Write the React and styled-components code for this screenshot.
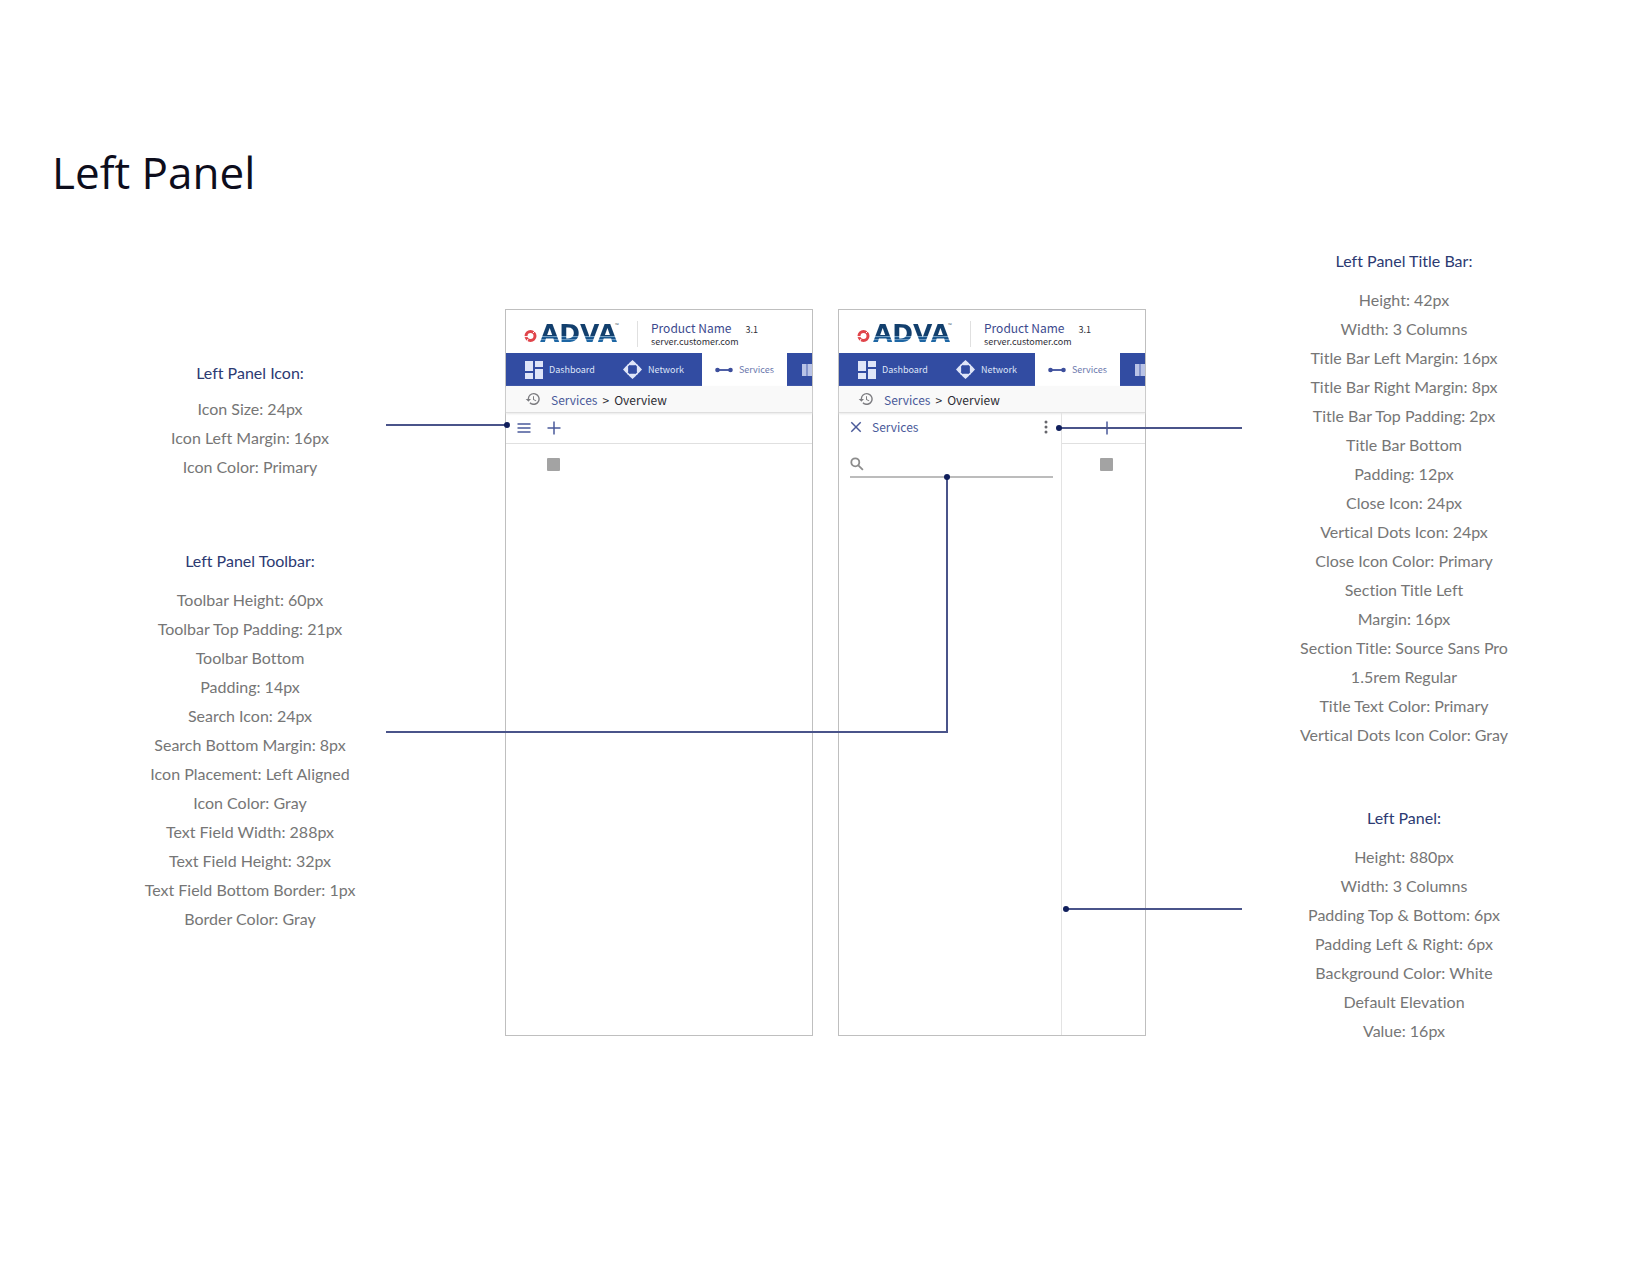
import React from "react";
import styled, { createGlobalStyle } from "styled-components";

const ink = "#2c3a72";
const primary = "#4a5a9a";

const GlobalStyle = createGlobalStyle`
  *, *::before, *::after { box-sizing: border-box; }
  body { margin: 0; background: #fff; }
  h1, h2, ul, p { margin: 0; padding: 0; }
  ul { list-style: none; }
  button { border: 0; padding: 0; background: none; color: inherit; display: flex; cursor: pointer; }
  a { color: inherit; text-decoration: none; }
`;

const Page = styled.main`
  padding: 140px 52px 80px;
  font-family: Lato, "Open Sans", sans-serif;
`;

const PageTitle = styled.h1`
  font: 400 44px/64px "Open Sans", "Noto Sans", sans-serif;
  color: #0d0d1c;
`;

const Board = styled.div`
  display: grid;
  grid-template-columns: minmax(0, 272px) minmax(0, 641px) minmax(0, 278px);
  column-gap: 119px;
  justify-content: center;
  padding: 42px 0 0 7px;
`;

const Notes = styled.div`
  display: flex;
  flex-direction: column;
  gap: ${(p) => p.$gap}px;
  padding-top: ${(p) => p.$top}px;
  text-align: center;
`;

const Note = styled.section`
  display: flex;
  flex-direction: column;
  gap: ${(p) => (p.$tight ? 7 : 10)}px;
  font-size: 16px;
  line-height: 29px;
  font-variant-ligatures: none;
  color: #767676;
`;

const NoteTitle = styled.h2`
  font: inherit;
  color: ${ink};
`;

const Stage = styled.div`
  display: grid;
  grid-template-columns: minmax(0, 1fr) minmax(0, 1fr);
  column-gap: 25px;
  align-items: start;
  padding-top: 63px;
`;

const Screen = styled.article`
  position: relative;
  display: flex;
  flex-direction: column;
  min-height: 727px;
  border: 1px solid #bfbfbf;
  font-family: "Noto Sans CJK SC", "Noto Sans", sans-serif;
`;

const Header = styled.header`
  display: flex;
  align-items: center;
  height: 43px;
  padding: 4px 0 0 18px;
`;

const Brand = styled.div`
  display: flex;
  flex: none;
  align-items: center;
  gap: 3px;
  width: 114px;
  height: 26px;
  border-right: 1px solid #e0e0e0;
`;

const BrandMark = styled.svg`
  flex: none;
  width: 13px;
  height: 14px;
  margin-top: 4px;
`;

const BrandName = styled.span`
  font: 700 25px/24px "DejaVu Sans", sans-serif;
  color: transparent;
  background: linear-gradient(
    #123f6d 58%, #7fa6c8 60%, #1d5c94 64%, #174f86 70%, #7fa6c8 72%, #1d66a4 76%
  );
  background-clip: text;
`;

const Trademark = styled.sup`
  align-self: flex-start;
  margin-left: -5px;
  font: 400 5px/8px "Open Sans", sans-serif;
  color: #456;
`;

const Product = styled.div`
  display: grid;
  grid-template-columns: auto auto;
  column-gap: 14px;
  align-items: baseline;
  padding-left: 13px;
  color: #2f2f38;
`;

const ProductName = styled.strong`
  font-size: 12px;
  line-height: 14px;
  font-weight: 400;
  color: #3c4a8e;
`;

const Version = styled.span`
  font-size: 9px;
  line-height: 14px;
`;

const Host = styled.span`
  grid-column: 1 / -1;
  font-size: 9px;
  line-height: 10px;
`;

const Tabs = styled.nav`
  display: flex;
  height: 33px;
  padding-left: 6px;
  background: #324ca2;
  overflow: hidden;
`;

const Tab = styled.a`
  display: flex;
  flex: none;
  align-items: center;
  gap: 6px;
  width: ${(p) => p.$width}px;
  padding-left: 13px;
  font-size: 9px;
  color: ${(p) => (p.$active ? "#6b78ad" : "#dfe5f8")};
  background: ${(p) => (p.$active ? "#fff" : "transparent")};
`;

const Glyph = styled.svg`
  flex: none;
  width: ${(p) => p.$size}px;
  height: ${(p) => p.$size}px;
  color: ${(p) => p.$color || "currentColor"};
`;

const Crumbs = styled.nav`
  display: flex;
  align-items: center;
  gap: 5px;
  height: 27px;
  padding-left: 19px;
  border-bottom: 1px solid #dedede;
  box-shadow: 0 1px 2px #e8e8e8;
  background: #f9f9f9;
  font-size: 12px;
  color: #2c2c34;
  a { color: ${primary}; margin-left: 5px; }
`;

const Body = styled.div`
  display: flex;
  flex: 1;
`;

const LeftPanel = styled.aside`
  flex: none;
  width: 223px;
  border-right: 1px solid #e3e3e3;
  padding: 0 8px 0 11px;
`;

const PanelTitleBar = styled.div`
  display: flex;
  align-items: center;
  gap: 10px;
  height: 28px;
  font-size: 12px;
  line-height: 14px;
  color: ${primary};
`;

const PanelTitle = styled.h2`
  flex: 1;
  font: inherit;
`;

const SearchField = styled.label`
  display: flex;
  align-items: center;
  height: 37px;
  padding-top: 10px;
  border-bottom: 2px solid #bcbcbc;
`;

const SearchInput = styled.input`
  flex: 1;
  min-width: 0;
  border: 0;
  outline: 0;
  background: transparent;
  font: inherit;
`;

const Content = styled.div`
  flex: 1;
`;

const Toolbar = styled.div`
  display: flex;
  align-items: center;
  gap: 16px;
  height: 31px;
  padding-left: ${(p) => p.$inset}px;
  border-bottom: 1px solid #e0e0e0;
  color: ${primary};
`;

const Tile = styled.div`
  width: 13px;
  height: 13px;
  margin: 14px 0 0 ${(p) => p.$inset}px;
  border-radius: 1px;
  background: #a3a3a3;
`;

const Connector = styled.div`
  position: absolute;
  z-index: 1;
  left: ${(p) => p.$left}px;
  top: ${(p) => p.$top}px;
  width: ${(p) => p.$width}px;
  height: ${(p) => p.$height || 2}px;
  border: 0 solid #4a548a;
  border-bottom-width: 2px;
  border-right-width: ${(p) => (p.$height ? 2 : 0)}px;
  pointer-events: none;
  &::after {
    content: "";
    position: absolute;
    top: ${(p) => (p.$height ? -3 : -2)}px;
    ${(p) => (p.$dot === "left" ? "left" : "right")}: ${(p) => (p.$height ? -4 : -3)}px;
    width: 6px;
    height: 6px;
    border-radius: 50%;
    background: #101f5c;
  }
`;

const DashboardIcon = () => (
  <Glyph $size={18} viewBox="0 0 18 18" fill="currentColor" aria-hidden="true">
    <path d="M0 0h8v10H0zM10 0h8v6h-8zM0 12h8v6H0zM10 8h8v10h-8z" />
  </Glyph>
);

const NetworkIcon = () => (
  <Glyph $size={19} viewBox="0 0 20 20" aria-hidden="true">
    <circle cx="10" cy="10" r="6.6" fill="none" stroke="currentColor" strokeWidth="1.8" />
    <g fill="currentColor">
      <path d="M10 0 13.800 3.400 12.400 5.400H7.600L6.200 3.400zM10 20l3.800-3.400-1.400-2H7.600l-1.400 2z" />
      <path d="M0 10l3.400-3.800 2 1.400v4.800l-2 1.400zM20 10l-3.400-3.800-2 1.400v4.800l2 1.400z" />
    </g>
  </Glyph>
);

const ServicesIcon = () => (
  <Glyph $size={18} $color="#3d4f9c" viewBox="0 0 18 18" fill="currentColor" aria-hidden="true">
    <circle cx="2.5" cy="9" r="2.3" />
    <circle cx="15.5" cy="9" r="2.3" />
    <path d="M2 8.1h14v1.8H2z" />
  </Glyph>
);

const ColumnsIcon = () => (
  <Glyph $size={18} $color="#b9c3e6" viewBox="0 0 18 18" fill="currentColor" aria-hidden="true">
    <path d="M2 3h4.600v12H2zM7.400 3H12v12H7.400zM13 3h4.600v12H13z" />
  </Glyph>
);

const HistoryIcon = () => (
  <Glyph $size={16} $color="#7c7c80" viewBox="0 0 24 24" fill="currentColor" aria-hidden="true">
    <path d="M13 3a9 9 0 0 0-9 9H1l3.900 3.900.1.1L9 12H6a7 7 0 1 1 2.100 4.900l-1.400 1.400A9 9 0 1 0 13 3zm-1 5v5l4.300 2.500.7-1.200-3.500-2.100V8z" />
  </Glyph>
);

const StrokeIcon = ({ size, d, width = 2 }) => (
  <Glyph $size={size} viewBox="0 0 14 14" fill="none" stroke="currentColor" strokeWidth={width} aria-hidden="true">
    <path d={d} />
  </Glyph>
);

const DotsIcon = () => (
  <Glyph $size={14} $color="#66666c" viewBox="0 0 14 14" fill="currentColor" aria-hidden="true">
    <circle cx="7" cy="2" r="1.5" />
    <circle cx="7" cy="7" r="1.5" />
    <circle cx="7" cy="12" r="1.5" />
  </Glyph>
);

const SearchIcon = () => (
  <Glyph $size={14} $color="#8c8c8c" viewBox="0 0 14 14" fill="none" stroke="currentColor" strokeWidth="1.8" aria-hidden="true">
    <circle cx="5.3" cy="5.3" r="4" />
    <path d="m8.3 8.3 4.6 4.6" />
  </Glyph>
);

const AppHeader = () => (
  <>
    <Header>
      <Brand>
        <BrandMark viewBox="0 0 13 14" aria-hidden="true">
          <circle cx="6.5" cy="7" r="4.5" fill="none" stroke="#e0444a" strokeWidth="3" />
          <path d="M0 7.600h4M4 10l-2 4M9 4l3-3" stroke="#fff" strokeWidth="1" />
        </BrandMark>
        <BrandName>ADVA</BrandName>
        <Trademark>™</Trademark>
      </Brand>
      <Product>
        <ProductName>Product Name</ProductName>
        <Version>3.1</Version>
        <Host>server.customer.com</Host>
      </Product>
    </Header>
    <Tabs aria-label="Main">
      <Tab href="#dashboard" $width={98}><DashboardIcon />Dashboard</Tab>
      <Tab href="#network" $width={92}><NetworkIcon />Network</Tab>
      <Tab href="#services" $width={85} $active aria-current="page"><ServicesIcon />Services</Tab>
      <Tab href="#inventory" $width={60} aria-label="Inventory"><ColumnsIcon /></Tab>
    </Tabs>
    <Crumbs aria-label="Breadcrumb">
      <HistoryIcon />
      <a href="#services">Services</a>
      <span>&gt;</span>
      <span>Overview</span>
    </Crumbs>
  </>
);

const AddButton = () => (
  <button type="button" aria-label="Add">
    <StrokeIcon size={14} width={1.5} d="M7 .5v13M.5 7h13" />
  </button>
);

const notes = {
  icon: ["Left Panel Icon:", ["Icon Size: 24px", "Icon Left Margin: 16px", "Icon Color: Primary"]],
  toolbar: ["Left Panel Toolbar:", [
    "Toolbar Height: 60px", "Toolbar Top Padding: 21px", "Toolbar Bottom", "Padding: 14px",
    "Search Icon: 24px", "Search Bottom Margin: 8px", "Icon Placement: Left Aligned",
    "Icon Color: Gray", "Text Field Width: 288px", "Text Field Height: 32px",
    "Text Field Bottom Border: 1px", "Border Color: Gray",
  ]],
  titleBar: ["Left Panel Title Bar:", [
    "Height: 42px", "Width: 3 Columns", "Title Bar Left Margin: 16px", "Title Bar Right Margin: 8px",
    "Title Bar Top Padding: 2px", "Title Bar Bottom", "Padding: 12px", "Close Icon: 24px",
    "Vertical Dots Icon: 24px", "Close Icon Color: Primary", "Section Title Left", "Margin: 16px",
    "Section Title: Source Sans Pro", "1.5rem Regular", "Title Text Color: Primary",
    "Vertical Dots Icon Color: Gray",
  ]],
  panel: ["Left Panel:", [
    "Height: 880px", "Width: 3 Columns", "Padding Top & Bottom: 6px", "Padding Left & Right: 6px",
    "Background Color: White", "Default Elevation", "Value: 16px",
  ]],
};

const SpecNote = ({ note: [title, lines], tight }) => (
  <Note $tight={tight}>
    <NoteTitle>{title}</NoteTitle>
    <ul>{lines.map((line) => <li key={line}>{line}</li>)}</ul>
  </Note>
);

export default function App() {
  return (
    <Page>
      <GlobalStyle />
      <PageTitle>Left Panel</PageTitle>
      <Board>
        <Notes $top={112} $gap={65}>
          <SpecNote note={notes.icon} tight />
          <SpecNote note={notes.toolbar} />
        </Notes>
        <Stage>
          <Screen>
            <AppHeader />
            <Body>
              <Content>
                <Toolbar $inset={11}>
                  <button type="button" aria-label="Open left panel">
                    <StrokeIcon size={14} width={1.5} d="M.5 3h13M.5 7h13M.5 11h13" />
                  </button>
                  <AddButton />
                </Toolbar>
                <Tile $inset={41} />
              </Content>
            </Body>
            <Connector $left={-120} $top={114} $width={121} $dot="right" />
          </Screen>
          <Screen>
            <AppHeader />
            <Body>
              <LeftPanel>
                <PanelTitleBar>
                  <button type="button" aria-label="Close left panel">
                    <StrokeIcon size={12} width={1.7} d="m1.5 1.5 11 11M12.5 1.5l-11 11" />
                  </button>
                  <PanelTitle>Services</PanelTitle>
                  <button type="button" aria-label="More options"><DotsIcon /></button>
                </PanelTitleBar>
                <SearchField>
                  <SearchIcon />
                  <SearchInput type="text" aria-label="Search services" />
                </SearchField>
              </LeftPanel>
              <Content>
                <Toolbar $inset={38}><AddButton /></Toolbar>
                <Tile $inset={38} />
              </Content>
            </Body>
            <Connector $left={-453} $top={167} $width={562} $height={256} $dot="right" />
            <Connector $left={220} $top={117} $width={183} $dot="left" />
            <Connector $left={227} $top={598} $width={176} $dot="left" />
          </Screen>
        </Stage>
        <Notes $top={0} $gap={54}>
          <SpecNote note={notes.titleBar} />
          <SpecNote note={notes.panel} />
        </Notes>
      </Board>
    </Page>
  );
}
